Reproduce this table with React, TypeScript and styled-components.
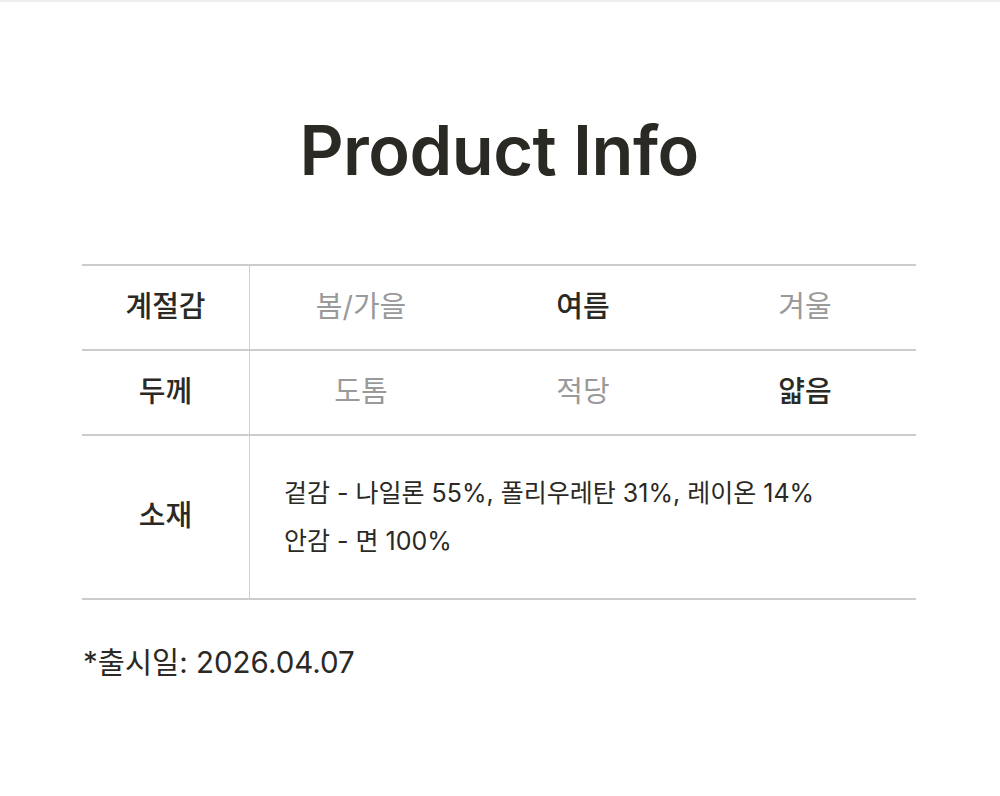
import * as React from "react";
import styled, { createGlobalStyle } from "styled-components";

const GlobalStyle = createGlobalStyle`
  html, body {
    margin: 0;
    padding: 0;
    background: #fff;
  }
  body {
    font-family: Inter, "Noto Sans CJK KR", "Noto Sans", sans-serif;
    color: #2b2924;
  }
`;

const seasons = [
  { label: "봄/가을", active: false },
  { label: "여름", active: true },
  { label: "겨울", active: false },
];

const thickness = [
  { label: "도톰", active: false },
  { label: "적당", active: false },
  { label: "얇음", active: true },
];

const App = () => {
  return (
    <>
      <GlobalStyle />
      <Page>
        <Title>Product Info</Title>

        <Table>
          <Row>
            <Label>계절감</Label>
            <Options>
              {seasons.map((s) => (
                <Option key={s.label} $active={s.active}>
                  {s.label}
                </Option>
              ))}
            </Options>
          </Row>
          <Row>
            <Label>두께</Label>
            <Options>
              {thickness.map((t) => (
                <Option key={t.label} $active={t.active}>
                  {t.label}
                </Option>
              ))}
            </Options>
          </Row>
          <Row $tall>
            <Label>소재</Label>
            <Material>
              <p>겉감 - 나일론 55%, 폴리우레탄 31%, 레이온 14%</p>
              <p>안감 - 면 100%</p>
            </Material>
          </Row>
        </Table>

        <ReleaseDate>*출시일: 2026.04.07</ReleaseDate>
      </Page>
    </>
  );
};

export default App;

const Page = styled.div`
  box-sizing: border-box;
  width: 1000px;
  height: 796px;
  border-top: 2px solid #eeeeee;
  padding: 0 84px 0 82px;
`;

const Title = styled.h1`
  margin: 108px 0 72px;
  font-size: 68.5px;
  line-height: 82px;
  font-weight: 600;
  letter-spacing: -0.5px;
  text-align: center;
  color: #2b2924;
`;

const Table = styled.div`
  border-top: 2px solid #cccccc;
`;

const Row = styled.div<{ $tall?: boolean }>`
  display: grid;
  grid-template-columns: 168px 1fr;
  height: ${(p) => (p.$tall ? "162px" : "83px")};
  border-bottom: 2px solid #cccccc;
`;

const Label = styled.div`
  display: flex;
  align-items: center;
  justify-content: center;
  padding-bottom: 8px;
  border-right: 1px solid #d0d0d0;
  font-size: 29px;
  font-weight: 500;
  color: #2b2924;
`;

const Options = styled.div`
  display: grid;
  grid-template-columns: repeat(3, 1fr);
  align-items: center;
  padding-bottom: 8px;
`;

const Option = styled.div<{ $active?: boolean }>`
  text-align: center;
  font-size: 29px;
  font-weight: ${(p) => (p.$active ? 500 : 400)};
  color: ${(p) => (p.$active ? "#2b2924" : "#9a9a9a")};
`;

const Material = styled.div`
  display: flex;
  flex-direction: column;
  justify-content: center;
  padding-left: 34px;
  p {
    margin: 0;
    font-size: 25px;
    line-height: 48px;
    color: #2b2924;
  }
`;

const ReleaseDate = styled.p`
  margin: 44px 0 0 1px;
  font-size: 29.5px;
  line-height: 36px;
  color: #2b2924;
`;
